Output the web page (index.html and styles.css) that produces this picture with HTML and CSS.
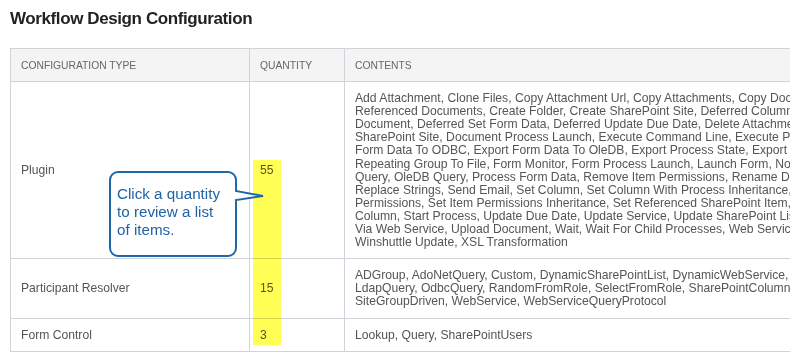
FILE: index.html
```
<!DOCTYPE html>
<html lang="en">
<head>
<meta charset="utf-8">
<title>Workflow Design Configuration</title>
<link rel="stylesheet" href="styles.css">
</head>
<body>
<div class="page">
  <h1 class="title">Workflow Design Configuration</h1>
  <div class="table-wrap">
    <table class="config">
      <thead>
        <tr>
          <th class="col-type">CONFIGURATION TYPE</th>
          <th class="col-qty">QUANTITY</th>
          <th class="col-contents">CONTENTS</th>
        </tr>
      </thead>
      <tbody>
        <tr>
          <td class="type">Plugin</td>
          <td class="qty">55</td>
          <td class="contents">
            <span class="line">Add Attachment, Clone Files, Copy Attachment Url, Copy Attachments, Copy Document, Copy List Item, Create</span>
            <span class="line">Referenced Documents, Create Folder, Create SharePoint Site, Deferred Column Update, Deferred Move</span>
            <span class="line">Document, Deferred Set Form Data, Deferred Update Due Date, Delete Attachments, Delete Item, Delete</span>
            <span class="line">SharePoint Site, Document Process Launch, Execute Command Line, Execute Process, Export</span>
            <span class="line">Form Data To ODBC, Export Form Data To OleDB, Export Process State, Export Repeating Group, Export</span>
            <span class="line">Repeating Group To File, Form Monitor, Form Process Launch, Launch Form, Notify, ODBC</span>
            <span class="line">Query, OleDB Query, Process Form Data, Remove Item Permissions, Rename Document,</span>
            <span class="line">Replace Strings, Send Email, Set Column, Set Column With Process Inheritance, Set Item</span>
            <span class="line">Permissions, Set Item Permissions Inheritance, Set Referenced SharePoint Item, Set SharePoint</span>
            <span class="line">Column, Start Process, Update Due Date, Update Service, Update SharePoint List Item</span>
            <span class="line">Via Web Service, Upload Document, Wait, Wait For Child Processes, Web Service,</span>
            <span class="line">Winshuttle Update, XSL Transformation</span>
          </td>
        </tr>
        <tr>
          <td class="type">Participant Resolver</td>
          <td class="qty">15</td>
          <td class="contents">
            <span class="line">ADGroup, AdoNetQuery, Custom, DynamicSharePointList, DynamicWebService, GroupDriven, Hierarchy,</span>
            <span class="line">LdapQuery, OdbcQuery, RandomFromRole, SelectFromRole, SharePointColumn, SharePointGroup,</span>
            <span class="line">SiteGroupDriven, WebService, WebServiceQueryProtocol</span>
          </td>
        </tr>
        <tr>
          <td class="type">Form Control</td>
          <td class="qty">3</td>
          <td class="contents">
            <span class="line">Lookup, Query, SharePointUsers</span>
          </td>
        </tr>
      </tbody>
    </table>
    <div class="highlight"></div>
    <div class="callout">
      <svg class="callout-shape" width="160" height="90" viewBox="0 0 160 90" aria-hidden="true">
        <path d="M10 2 H120 A8 8 0 0 1 128 10 V21 L155 26 L128 30 V78 A8 8 0 0 1 120 86 H10 A8 8 0 0 1 2 78 V10 A8 8 0 0 1 10 2 Z" fill="#ffffff" stroke="#1f68a8" stroke-width="2" stroke-linejoin="miter"/>
      </svg>
      <p class="callout-text">Click a quantity to review a list of items.</p>
    </div>
  </div>
</div>
</body>
</html>
```
FILE: styles.css
```
html, body {
  margin: 0;
  padding: 0;
  background: #ffffff;
  overflow: hidden;
}

.page {
  padding: 0 0 0 10px;
  font-family: "Liberation Sans", Arial, sans-serif;
  color: #555555;
}

.title {
  margin: 0;
  padding-top: 9px;
  height: 48px;
  box-sizing: border-box;
  font-size: 17px;
  line-height: 20px;
  font-weight: bold;
  color: #222222;
  letter-spacing: -0.4px;
}

.table-wrap {
  position: relative;
  width: 1100px;
}

.config {
  border-collapse: collapse;
  font-size: 12.15px;
  line-height: 13.1px;
}

.config th,
.config td {
  border: 1px solid #d2d2da;
  text-align: left;
  vertical-align: middle;
  padding: 10px 10px 9px 10px;
}

.config th {
  background: #f4f4f4;
  font-weight: normal;
  font-size: 10.3px;
  color: #666666;
  height: 13px;
}

.col-type { width: 218px; }
.col-qty { width: 74px; }
.col-contents { width: 720px; }

.qty {
  padding-left: 10px;
}

.contents .line {
  display: block;
  white-space: nowrap;
}

.highlight {
  position: absolute;
  left: 243px;
  top: 112px;
  width: 28px;
  height: 185px;
  background: #ffff55;
  mix-blend-mode: multiply;
}

.callout {
  position: absolute;
  left: 98px;
  top: 122px;
  width: 160px;
  height: 90px;
}

.callout-shape {
  display: block;
}

.callout-text {
  position: absolute;
  left: 9px;
  top: 15px;
  width: 112px;
  margin: 0;
  font-family: "Liberation Sans", Arial, sans-serif;
  font-size: 15.2px;
  line-height: 18px;
  color: #1f62a6;
}
```
